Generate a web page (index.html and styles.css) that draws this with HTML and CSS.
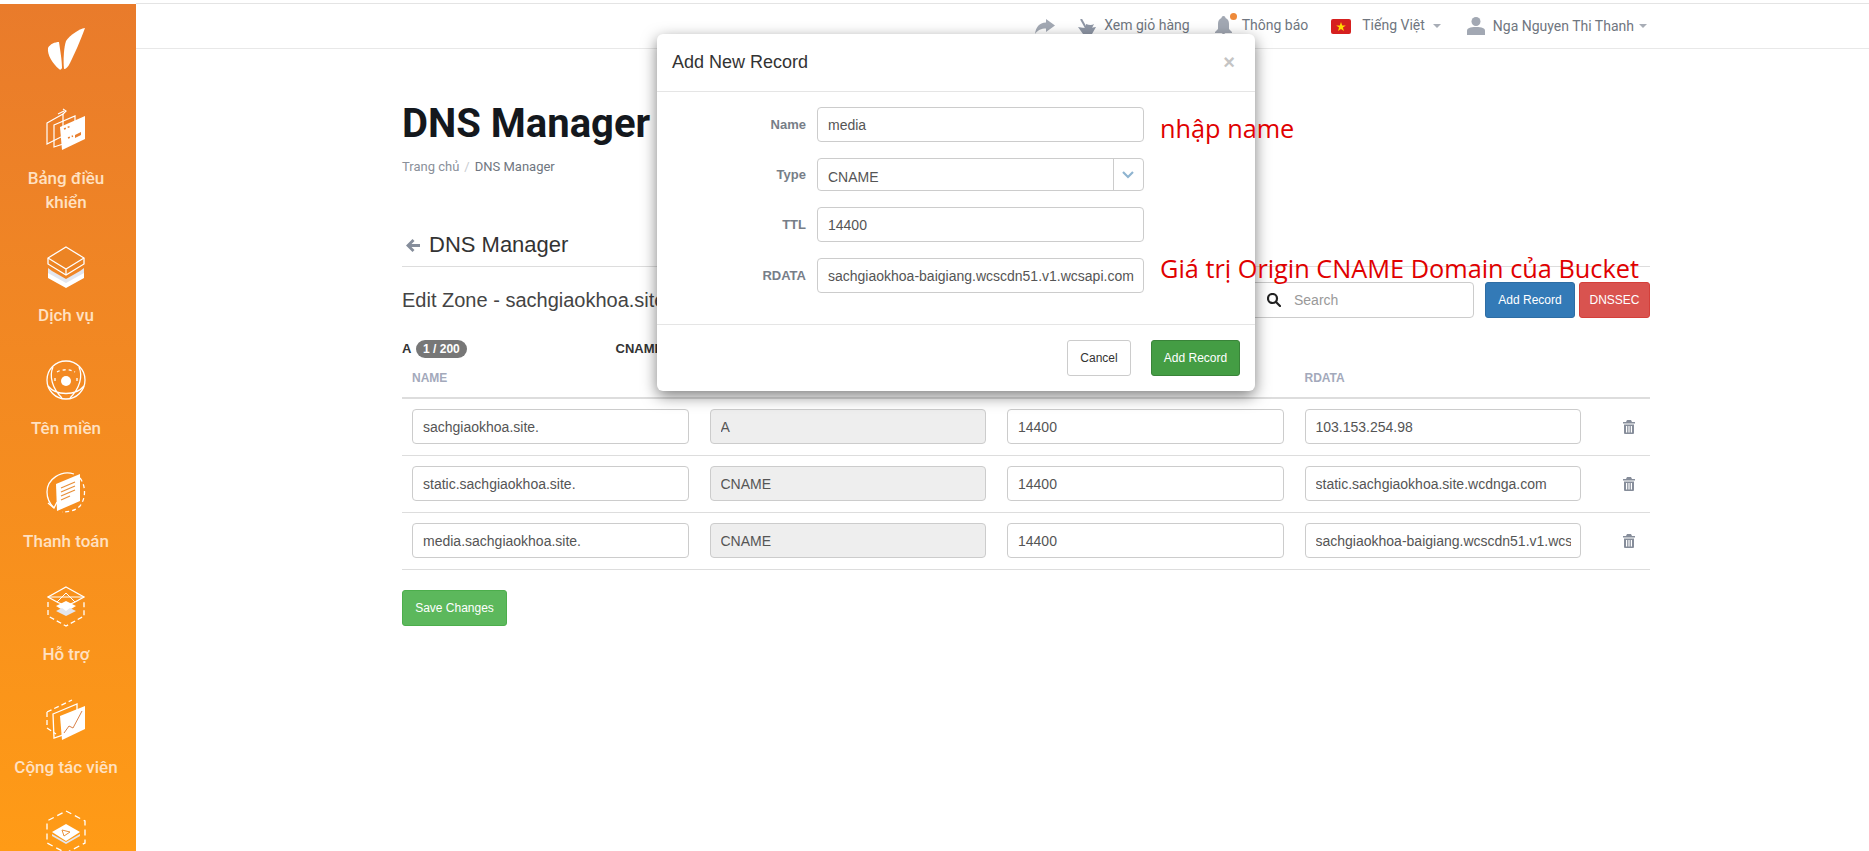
FILE: index.html
```html
<!DOCTYPE html>
<html lang="en">
<head>
    <meta charset="UTF-8">
    <meta name="viewport" content="width=device-width, initial-scale=1.0">
    <title>DNS Manager</title>
    <link rel="stylesheet" href="styles.css">
</head>
<body>
    <!-- Sidebar -->
    <nav class="sidebar">
        <svg class="logo" width="40" height="44" viewBox="0 0 40 44">
            <path d="M39 1C33 2 24 8 20 14C18 20 17 32 18 42C20 42 22 40 24 36C29 26 35 12 39 1Z" fill="#fff"/>
            <path d="M2 21C4 17 9 15 13 15C14 22 16 33 16 41C15 43 14 43 13 42C7 37 1 28 2 21Z" fill="#fff"/>
        </svg>
        <a class="side-item">
            <svg class="side-icon" width="44" height="44" viewBox="0 0 44 44" fill="none" stroke="#fff" stroke-width="1.2">
                <path d="M3 15L19 6V28L3 36Z"/><path d="M14 6L20 3M19 1L22 3L19 6"/>
                <path d="M10 17L31 8V32L10 39Z"/>
                <path d="M16 19L41 8V31L18 42Z" fill="#fff" stroke="none"/>
                <path d="M20 21L27 18M24 30L29 28" stroke="#e98030" stroke-width="1.5" stroke-dasharray="2 2"/>
                <path d="M31 27L37 24V27L31 30Z" fill="#e98030" stroke="none"/>
            </svg>
            <span>Bảng điều khiển</span>
        </a>
        <a class="side-item">
            <svg class="side-icon" width="44" height="44" viewBox="0 0 44 44" fill="none" stroke="#fff" stroke-width="1.3">
                <path d="M4 26L22 37L40 26V33L22 43L4 33Z" fill="#fff" stroke="none"/>
                <path d="M8 26L22 34L36 26L40 23V28L22 38L4 28V23Z" fill="#e3e6ee" stroke="none"/>
                <path d="M22 2L40 13V19L22 30L4 19V13Z" fill="#ec8424"/>
                <path d="M4 13L22 24L40 13M22 24V30"/>
            </svg>
            <span>Dịch vụ</span>
        </a>
        <a class="side-item">
            <svg class="side-icon" width="44" height="44" viewBox="0 0 44 44" fill="none" stroke="#fff" stroke-width="1.3">
                <circle cx="22" cy="22" r="19"/>
                <circle cx="22" cy="23" r="5" fill="#fff" stroke="none"/>
                <path d="M4 28C12 38 32 38 40 28M9 9C5 18 8 30 18 40M35 9C39 18 36 30 26 40"/>
                <path d="M13 14C18 11 26 11 31 14M11 20V24M33 20V24" stroke-dasharray="3 3"/>
            </svg>
            <span>Tên miền</span>
        </a>
        <a class="side-item">
            <svg class="side-icon" width="44" height="44" viewBox="0 0 44 44" fill="none" stroke="#fff" stroke-width="1.3">
                <path d="M30 3C17 -1 3 8 3 21C3 28 6 33 10 37"/>
                <path d="M4 32L10 37L13 31"/>
                <path d="M36 7C42 15 42 27 36 35C31 40 24 41 18 41" stroke-dasharray="4 3"/>
                <path d="M12 13L36 3V30L13 40Z" fill="#fff" stroke="none"/>
                <path d="M17 17L31 11M17 21L31 15M17 25L31 19M17 29L26 25" stroke="#e8903a"/>
            </svg>
            <span>Thanh toán</span>
        </a>
        <a class="side-item">
            <svg class="side-icon" width="44" height="44" viewBox="0 0 44 44" fill="none" stroke="#fff" stroke-width="1.3">
                <path d="M4 18V32L22 42L40 32V18" stroke-dasharray="5 3"/>
                <path d="M22 3L40 13L31 18L22 22L13 18L4 13Z"/>
                <path d="M4 13L22 13L40 13M13 18L22 9L31 18" stroke-width="1"/>
                <path d="M12 22L22 17L32 22L22 28Z" fill="#fff" stroke="none"/>
                <path d="M12 27L22 32L32 27L26 24L22 27L18 24Z" fill="#e3e6ee" stroke="none"/>
            </svg>
            <span>Hỗ trợ</span>
        </a>
        <a class="side-item">
            <svg class="side-icon" width="44" height="44" viewBox="0 0 44 44" fill="none" stroke="#fff" stroke-width="1.3">
                <path d="M3 15V31L12 37M3 15L28 3" stroke-dasharray="5 3"/>
                <path d="M9 17L33 7V33L10 41Z"/>
                <path d="M16 19L41 9V32L18 43Z" fill="#fff" stroke="none"/>
                <path d="M20 36L25 29L29 31L38 14" stroke="#d9824a" stroke-width="1"/>
            </svg>
            <span>Cộng tác viên</span>
        </a>
        <a class="side-item">
            <svg class="side-icon" width="44" height="44" viewBox="0 0 44 44" fill="none" stroke="#fff" stroke-width="1.3">
                <path d="M22 1L41 11V33L22 43L3 33V11Z" stroke-dasharray="6 4"/>
                <path d="M8 22L22 14L36 22L22 31Z" fill="#fff" stroke="none"/>
                <path d="M8 24L22 32L36 24V26L22 34L8 26Z" fill="#e3e6ee" stroke="none"/>
                <path d="M18 20L26 22L20 26Z" stroke="#e8903a" stroke-width="1"/>
            </svg>
        </a>
    </nav>

    <div class="main">
        <!-- Top bar -->
        <header class="topbar">
            <svg class="top-share" width="20" height="15" viewBox="0 0 20 15"><path d="M11 0L20 6.500L11 13V9.500C6 9.500 3 11 0 15C1 8 4 4 11 3.500Z" fill="#a3a9b4"/></svg>
            <a class="top-link">
                <svg width="18" height="15" viewBox="0 0 18 15" fill="#8f97a6"><path d="M0 8Q9 10 18 8L14 15H5Z"/><path d="M3 0L8 9" fill="none" stroke="#8f97a6" stroke-width="2"/><path d="M8 5Q13 7 16 5L14 9H8Z"/></svg>
                <span>Xem giỏ hàng</span>
            </a>
            <a class="top-link top-bell">
                <svg width="17" height="21" viewBox="0 0 17 21"><path d="M8.500 0C10 0 10.500 1 10.500 2C13 3 14 5 14 8V13L17 16V17H0V16L3 13V8C3 5 4 3 6.500 2C6.500 1 7 0 8.500 0Z" fill="#a2a8b3"/><circle cx="8.500" cy="19" r="2" fill="#a2a8b3"/></svg>
                <i class="bell-dot"></i>
                <span>Thông báo</span>
            </a>
            <a class="top-link top-lang">
                <svg width="20" height="15" viewBox="0 0 20 15"><rect width="20" height="15" rx="2" fill="#d6201f"/><polygon points="10,3 11.200,6.400 14.800,6.400 11.900,8.500 13,12 10,9.900 7,12 8.100,8.500 5.200,6.400 8.800,6.400" fill="#fd0"/></svg>
                <span>Tiếng Việt</span>
                <i class="caret"></i>
            </a>
            <a class="top-link top-user">
                <svg width="18" height="18" viewBox="0 0 18 18"><circle cx="9" cy="4.500" r="4.500" fill="#a2a8b3"/><path d="M0 18V14C0 11 3 10 9 10C15 10 18 11 18 14V18Z" fill="#a2a8b3"/></svg>
                <span>Nga Nguyen Thi Thanh</span>
                <i class="caret"></i>
            </a>
        </header>

        <div class="content">
            <h1>DNS Manager</h1>
            <div class="breadcrumb"><span class="crumb-home">Trang chủ</span><span class="crumb-sep">/</span><span>DNS Manager</span></div>

            <h3 class="back-title">
                <svg width="14" height="13" viewBox="0 0 14 13"><path d="M6.500 0L8.500 2L5.500 5H14V8H5.500L8.500 11L6.500 13L0 6.500Z" fill="#858d9b"/></svg>
                DNS Manager
            </h3>

            <div class="toolbar">
                <div class="zone-title">Edit Zone - sachgiaokhoa.site</div>
                <div class="toolbar-right">
                    <div class="search-box">
                        <svg width="14" height="14" viewBox="0 0 14 14" fill="none" stroke="#222" stroke-width="2.200"><circle cx="5.500" cy="5.500" r="4.500"/><path d="M9 9L13 13" stroke-linecap="round"/></svg>
                        <span>Search</span>
                    </div>
                    <button class="btn btn-blue">Add Record</button>
                    <button class="btn btn-red">DNSSEC</button>
                </div>
            </div>

            <div class="counts">
                <div class="count">A <span class="badge">1 / 200</span></div>
                <div class="count">CNAME <span class="badge">2 / 200</span></div>
            </div>

            <table class="records">
                <thead>
                    <tr><th>NAME</th><th>TYPE</th><th>TTL</th><th>RDATA</th><th></th></tr>
                </thead>
                <tbody>
                    <tr>
                        <td><input value="sachgiaokhoa.site."></td>
                        <td><input value="A" disabled></td>
                        <td><input value="14400"></td>
                        <td><input value="103.153.254.98"></td>
                        <td class="trash-cell"><svg class="trash" width="12" height="14" viewBox="0 0 12 14"><path d="M4 0H8L9 2H12V3.500H0V2H3ZM1 4.500H11V13Q11 14 10 14H2Q1 14 1 13ZM3 6V12.500H4.200V6ZM5.400 6V12.500H6.600V6ZM7.800 6V12.500H9V6Z" fill="#868d9a" fill-rule="evenodd"/></svg></td>
                    </tr>
                    <tr>
                        <td><input value="static.sachgiaokhoa.site."></td>
                        <td><input value="CNAME" disabled></td>
                        <td><input value="14400"></td>
                        <td><input value="static.sachgiaokhoa.site.wcdnga.com"></td>
                        <td class="trash-cell"><svg class="trash" width="12" height="14" viewBox="0 0 12 14"><path d="M4 0H8L9 2H12V3.500H0V2H3ZM1 4.500H11V13Q11 14 10 14H2Q1 14 1 13ZM3 6V12.500H4.200V6ZM5.400 6V12.500H6.600V6ZM7.800 6V12.500H9V6Z" fill="#868d9a" fill-rule="evenodd"/></svg></td>
                    </tr>
                    <tr>
                        <td><input value="media.sachgiaokhoa.site."></td>
                        <td><input value="CNAME" disabled></td>
                        <td><input value="14400"></td>
                        <td><input value="sachgiaokhoa-baigiang.wcscdn51.v1.wcsapi.com"></td>
                        <td class="trash-cell"><svg class="trash" width="12" height="14" viewBox="0 0 12 14"><path d="M4 0H8L9 2H12V3.500H0V2H3ZM1 4.500H11V13Q11 14 10 14H2Q1 14 1 13ZM3 6V12.500H4.200V6ZM5.400 6V12.500H6.600V6ZM7.800 6V12.500H9V6Z" fill="#868d9a" fill-rule="evenodd"/></svg></td>
                    </tr>
                </tbody>
            </table>

            <button class="btn btn-save">Save Changes</button>
        </div>
    </div>

    <!-- Add record dialog -->
    <div class="modal">
        <div class="modal-header">
            <span>Add New Record</span>
            <span class="modal-close">&times;</span>
        </div>
        <div class="modal-body">
            <label>Name</label>
            <input value="media">
            <label>Type</label>
            <div class="select-box">
                <span>CNAME</span>
                <div class="select-arrow"><svg width="12" height="8" viewBox="0 0 12 8" fill="none" stroke="#8fb4d0" stroke-width="2.200"><path d="M1 1L6 6L11 1"/></svg></div>
            </div>
            <label>TTL</label>
            <input value="14400">
            <label>RDATA</label>
            <input value="sachgiaokhoa-baigiang.wcscdn51.v1.wcsapi.com">
        </div>
        <div class="modal-footer">
            <button class="btn btn-cancel">Cancel</button>
            <button class="btn btn-green">Add Record</button>
        </div>
    </div>

    <!-- Notes written over the screenshot -->
    <div class="note note-name">nhập name</div>
    <div class="note note-rdata">Giá trị Origin CNAME Domain của Bucket</div>
</body>
</html>
```

FILE: styles.css
```css
* {
    box-sizing: border-box;
}

html, body {
    height: 100%;
}

body {
    display: flex;
    margin: 0;
    padding-top: 3px;
    overflow: hidden;
    background-color: #fff;
    color: #333;
    font-family: "Liberation Sans", Arial, sans-serif;
    font-size: 14px;
}

/* Sidebar */
.sidebar {
    display: flex;
    flex-direction: column;
    align-items: center;
    flex: 0 0 136px;
    height: 848px;
    margin-top: 1px;
    padding-right: 4px;
    overflow: hidden;
    background: linear-gradient(180deg, #e97b2b 0%, #ff9b16 100%);
    font-family: Roboto, sans-serif;
}

.logo {
    flex: none;
    margin-top: 23px;
    margin-bottom: 37px;
}

.side-item {
    display: flex;
    flex-direction: column;
    align-items: center;
    flex: none;
    width: 110px;
    padding-bottom: 31px;
    color: #ffe1c2;
    font-size: 17px;
    font-weight: 500;
    line-height: 24px;
    text-align: center;
}

.side-icon {
    flex: none;
    margin-bottom: 14px;
}

/* Top bar */
.main {
    flex: 1;
    min-width: 0;
}

.topbar {
    display: flex;
    justify-content: flex-end;
    align-items: center;
    height: 46px;
    padding-right: 222px;
    border-top: 1px solid #e4e4e4;
    border-bottom: 1px solid #e8e8e8;
    color: #6f7680;
    font-family: Roboto, sans-serif;
    font-size: 14px;
}

.top-share {
    margin-right: 23px;
}

.top-link {
    position: relative;
    display: flex;
    align-items: center;
    gap: 8px;
}

.top-link span {
    margin-top: -2px;
}

.top-bell {
    margin-left: 25px;
    gap: 10px;
}

.bell-dot {
    position: absolute;
    top: -3px;
    left: 15px;
    width: 7px;
    height: 7px;
    border-radius: 50%;
    background-color: #ee8a3a;
}

.top-lang {
    margin-left: 23px;
    gap: 11px;
}

.top-user {
    margin-left: 26px;
}

.top-user span {
    margin-top: 0;
}

.caret {
    width: 0;
    height: 0;
    margin-left: -3px;
    border-top: 4px solid #a8adb6;
    border-left: 4px solid transparent;
    border-right: 4px solid transparent;
}

/* Page content */
.content {
    padding: 53px 219px 0 266px;
}

h1 {
    margin: 0;
    color: #14181d;
    font-family: Roboto, sans-serif;
    font-size: 40px;
    font-weight: 700;
    line-height: 44px;
}

.breadcrumb {
    display: flex;
    margin-top: 11px;
    color: #6f7680;
    font-family: Roboto, sans-serif;
    font-size: 13px;
    line-height: 20px;
}

.crumb-home {
    color: #8a909a;
}

.crumb-sep {
    margin: 0 5px;
    color: #c9ccd1;
}

.back-title {
    display: flex;
    align-items: center;
    gap: 9px;
    margin: 52px 0 0;
    padding: 0 0 5px 4px;
    border-bottom: 1px solid #ddd;
    color: #333;
    font-size: 22px;
    font-weight: 400;
    line-height: 32px;
}

.toolbar {
    display: flex;
    justify-content: space-between;
    align-items: center;
    margin-top: 15px;
}

.zone-title {
    color: #444;
    font-size: 20px;
}

.toolbar-right {
    display: flex;
    align-items: stretch;
    gap: 4px;
}

.search-box {
    display: flex;
    align-items: center;
    gap: 13px;
    width: 240px;
    height: 36px;
    margin-right: 7px;
    padding-left: 32px;
    border: 1px solid #ccc;
    border-radius: 4px;
    color: #999;
    font-size: 14px;
}

.btn {
    height: 36px;
    padding: 0;
    border: 1px solid transparent;
    border-radius: 3px;
    color: #fff;
    font-family: "Liberation Sans", Arial, sans-serif;
    font-size: 12px;
    font-weight: 400;
}

.btn-blue {
    width: 90px;
    background-color: #337ab7;
    border-color: #2e6da4;
}

.btn-red {
    width: 71px;
    background-color: #d9534f;
    border-color: #d43f3a;
}

.btn-save {
    display: block;
    width: 105px;
    margin-top: 20px;
    background-color: #5cb85c;
    border-color: #4cae4c;
}

.counts {
    display: flex;
    height: 18px;
    margin-top: 22px;
    color: #333;
    font-size: 13px;
    font-weight: 700;
    line-height: 18px;
}

.count {
    width: 213.500px;
}

.badge {
    display: inline-block;
    height: 18px;
    margin-left: 1px;
    padding: 0 7.500px;
    border-radius: 9px;
    background-color: #777;
    color: #fff;
    font-size: 12px;
}

/* Records table */
.records {
    width: 100%;
    table-layout: fixed;
    border-collapse: separate;
    border-spacing: 0;
}

.records th {
    width: 297.500px;
    height: 41px;
    padding: 1px 0 0 10px;
    border-bottom: 2px solid #ddd;
    color: #a3a9bb;
    font-size: 12px;
    font-weight: 700;
    text-align: left;
}

.records th:last-child {
    width: 58px;
}

.records td {
    padding: 10px 11px 11px 10px;
    border-bottom: 1px solid #ddd;
}

.records .trash-cell {
    padding: 0 0 0 31px;
}

.trash {
    display: block;
}

input {
    display: block;
    width: 100%;
    height: 35px;
    padding: 0 9px 0 10px;
    border: 1px solid #ccc;
    border-radius: 4px;
    background-color: #fff;
    color: #555;
    font-family: "Liberation Sans", Arial, sans-serif;
    font-size: 14px;
}

input:disabled {
    background-color: #eee;
    color: #555;
}

/* Modal */
.modal {
    position: absolute;
    top: 34px;
    left: 657px;
    width: 598px;
    height: 357px;
    border-radius: 6px;
    background-color: #fff;
    box-shadow: 0 5px 15px rgba(0, 0, 0, 0.5);
}

.modal-header {
    display: flex;
    justify-content: space-between;
    align-items: center;
    height: 58px;
    padding: 0 20px 0 15px;
    border-bottom: 1px solid #e5e5e5;
    color: #333;
    font-size: 18px;
}

.modal-close {
    color: #c4c4c4;
    font-size: 20px;
    font-weight: 700;
}

.modal-body {
    display: grid;
    grid-template-columns: 149px 326.500px;
    column-gap: 11px;
    row-gap: 16px;
    align-items: center;
    height: 232px;
    align-content: start;
    padding-top: 15px;
}

.modal-body label {
    color: #777e88;
    font-size: 13px;
    font-weight: 700;
    text-align: right;
}

.select-box {
    display: flex;
    justify-content: space-between;
    align-items: center;
    height: 33px;
    padding-left: 10px;
    border: 1px solid #ccc;
    border-radius: 4px;
    color: #555;
}

.select-box span {
    margin-top: 4px;
}

.select-arrow {
    display: flex;
    justify-content: center;
    align-items: center;
    width: 30px;
    height: 100%;
    border-left: 1px solid #ccc;
}

.modal-footer {
    display: flex;
    justify-content: flex-end;
    gap: 20px;
    padding: 15px 15px 0;
    border-top: 1px solid #e5e5e5;
}

.btn-cancel {
    width: 64px;
    background-color: #fff;
    border-color: #ccc;
    color: #333;
}

.btn-green {
    width: 89px;
    background-color: #449d44;
    border-color: #398439;
}

/* Red notes */
.note {
    position: absolute;
    color: #e00000;
    font-family: "Open Sans", sans-serif;
    font-size: 25.300px;
    line-height: 34px;
    white-space: nowrap;
}

.note-name {
    top: 111px;
    left: 1160px;
}

.note-rdata {
    top: 251px;
    left: 1160px;
}
```
